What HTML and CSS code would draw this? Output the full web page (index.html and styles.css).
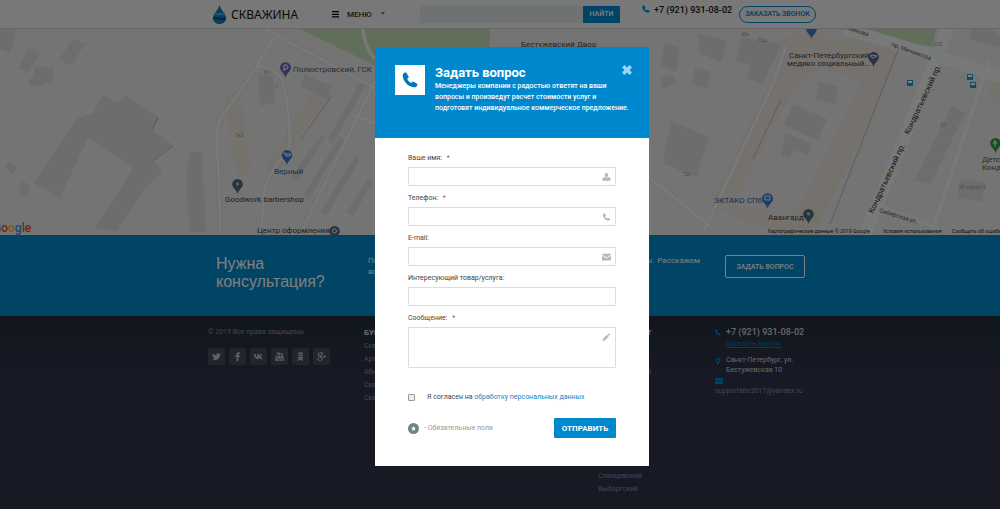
FILE: index.html
```html
<!DOCTYPE html>
<html lang="ru">
<head>
  <meta charset="UTF-8" />
  <meta name="viewport" content="width=device-width, initial-scale=1.0"/>
  <title>Скважина</title>
  <link rel="stylesheet" href="styles.css">
</head>
<body>

  <!-- icons used several times -->
  <svg class="sprite" aria-hidden="true">
    <symbol id="i-phone" viewBox="0 0 16 16">
      <path d="M4.3.8 6.6 4.6c.2.5 0 .9-.4 1.3l-1 .9c.8 2 2.2 3.4 4.1 4.2l1-1c.4-.4.8-.5 1.3-.3l3.5 2c.4.3.5.7.3 1.2-.6 1.6-1.8 2.5-3.4 2.3C6 14.500 1.300 9.500.7 3.900.600 2.300 1.500 1.100 3 .5c.6-.2 1-.1 1.300.3z"/>
    </symbol>
    <symbol id="i-mail" viewBox="0 0 16 12">
      <path d="M1 0h14c.6 0 1 .4 1 1v.6L8 7 0 1.600V1c0-.6.4-1 1-1zM0 3.200l8 5.300 8-5.300V11c0 .6-.4 1-1 1H1c-.6 0-1-.4-1-1z"/>
    </symbol>
    <symbol id="i-pin" viewBox="0 0 12 17">
      <path fill-rule="evenodd" d="M6 0a6 6 0 0 1 6 6c0 4-5 6-6 11C5 12 0 10 0 6a6 6 0 0 1 6-6z"/>
    </symbol>
  </svg>

  <header class="header">
    <div class="header-inner">
      <a class="logo" href="#">
        <svg class="logo-icon" viewBox="0 0 26 38">
          <path fill="#1578b8" d="M13 0c2 8 6 11 9 16 3 5 5 8 4 12-1 7-7 10-13 10S0 34 0 26c0-4 2-7 4-10 3-5 7-8 9-16z"/>
          <path fill="#3bb0e4" d="M4 17c6-3 10 1 18-2l2 4c-9 4-15-1-23 2z"/>
          <path fill="#0b4f80" d="M0 25c9-3 17 3 26 0l-1 4c-8 3-16-3-25 0z"/>
        </svg>
        <span>СКВАЖИНА</span>
      </a>
      <button class="menu" type="button">
        <svg class="menu-icon" viewBox="0 0 8 8"><path d="M0 0h8v1.500H0zM0 3h8v1.500H0zM0 6h8v1.500H0z"/></svg>
        МЕНЮ
        <svg class="menu-arrow" viewBox="0 0 6 4"><path d="M1 0h4L3 3z"/></svg>
      </button>
      <form class="search">
        <input type="search" aria-label="Поиск">
        <button type="button">НАЙТИ</button>
      </form>
      <a class="header-phone" href="tel:+79219310802">
        <svg><use href="#i-phone"/></svg>+7 (921) 931-08-02
      </a>
      <button class="call" type="button">ЗАКАЗАТЬ ЗВОНОК</button>
    </div>
  </header>

  <svg class="map" viewBox="0 0 1000 206" preserveAspectRatio="xMidYMid slice">
    <!-- parks -->
    <path class="park" d="M300 0h190v47H405L372 35z"/>
    <path class="park" d="M840 0h96l-3 17-20-1-50-9z"/>
    <!-- commercial areas -->
    <g class="orange">
      <path d="M225 64l16 2 10 71-12 15-7-27z"/>
      <path d="M313 62l18-6 5 6-40 48-8 25-21 13-1-9z"/>
      <path d="M775 46l8-37 28-9 18 14 40-6 31 17-86 181-25 1-53-19-25-13 56-116z"/>
      <path d="M990 50l10-3v27l-11-6z"/>
    </g>
    <path class="plain" d="M803 48l18-9 41 13-62 125-20 13-22-10-25-3 40-80z"/>
    <!-- buildings -->
    <g class="building">
      <path d="M0 0h17l-7 24-10-4z"/>
      <path d="M28 19l11 5-10 20-10-4z"/>
      <path d="M73 10l12 5-14 22-12-7z"/>
      <path d="M34 38h19v16h-8v3l-16 0v-7l5-2z"/>
      <path d="M102 66l15 8 10-7 33 22-8 12 21 15-20 16 10 10-20 20-26 40-22-3 38-60-45-30-28 60-27-15 45-65 15-5z"/>
      <path d="M190 123h12l4 80h-16l-4-50z"/>
      <path d="M258 46h15l2 28-15 3zM262 57l16-4 1 6-17 4zM305 45l26 12-3 14-28-15z"/>
      <path d="M322 105l3 3-28 44-6-4zM340 108l4 3-36 60-5-5zM356 126l4 4-33 56-6-4zM368 150l5 3-20 34-6-4z"/>
      <path d="M362 50l5 4-34 60-5-4z"/>
      <path d="M671 92l38 16-13 41-33-15z"/>
      <path d="M665 14l15 5-4 24-15-6zM697 5l30 6-5 22-22-8zM695 38l16 5-4 17-16-5zM742 8l40 7-20 40-15-6 3-12-14-5z"/>
      <path d="M818 53l20 4-2 18-20-5zM793 75l34 15-9 22-34-16zM786 104l26 11-4 11-14-5-5 8-8-2z"/>
      <path d="M952 76l13 8-34 70-17-2z"/>
      <path d="M660 50l12-4 5 8-15 6zM960 150l26 3-5 20-24-4z"/>
      <path d="M970 0h22l8 7v12l-30-8z"/>
      <path d="M8 133l10 4-5 8-8-6zM22 151l9 6-5 12-8-5z"/>
    </g>
    <!-- roads -->
    <g class="road-edge">
      <path d="M265 0l110 59M273 9l-16 28-35 51q-6 8-5 24 3 52 3 94M257 37q24 3 27 20 6 30 6 61-24 28-26 47l-3 41"/>
      <path d="M375 52l-75 154M352 85l23 10M363 0q2 20 12 30"/>
      <path d="M786 17l-12 36-72 153M645 145l65 52M653 140l-8 14"/>
    </g>
    <g class="road">
      <path d="M265 0l110 59M273 9l-16 28-35 51q-6 8-5 24 3 52 3 94M257 37q24 3 27 20 6 30 6 61-24 28-26 47l-3 41"/>
      <path d="M375 52l-75 154M352 85l23 10M363 0q2 20 12 30"/>
      <path d="M786 17l-12 36-72 153M645 145l65 52M653 140l-8 14M989 32l-58 174M875 175l65 25"/>
    </g>
    <path class="avenue" d="M948 0L865 206M845 0l95 28 60 20"/>
    <path class="rail" d="M899 18l-69 177M781 70l-28 60M158 88l-6 13M173 117l-20 15M331 68l-30 42"/>

    <g class="num">
      <text x="263" y="45">7к1</text>
      <text x="235" y="108">7к3</text>
      <text x="741" y="7">40л</text>
      <text x="758" y="13">72д</text>
      <text x="683" y="147">72г</text>
      <text x="934" y="17">27б</text>
      <text x="940" y="98">39</text>
      <text x="959" y="160">28 корпус 2</text>
    </g>

    <g class="pins">
      <use href="#i-pin" x="280" y="33" width="11" height="16" fill="#6a69c0"/>
      <use href="#i-pin" x="281" y="121" width="12" height="15" fill="#3c77d2"/>
      <use href="#i-pin" x="232" y="150" width="11" height="15" fill="#4f6d76"/>
      <use href="#i-pin" x="329" y="197" width="11" height="15" fill="#57648a"/>
      <use href="#i-pin" x="806" y="-5" width="11" height="15" fill="#3c77d2"/>
      <use href="#i-pin" x="868" y="23" width="11" height="15" fill="#57648a"/>
      <use href="#i-pin" x="762" y="164" width="11" height="16" fill="#3c77d2"/>
      <use href="#i-pin" x="803" y="180" width="11" height="15" fill="#4f6d76"/>
      <use href="#i-pin" x="990" y="109" width="11" height="15" fill="#2c9c41"/>
    </g>
    <g class="pin-mark">
      <path d="M284 42v-6h2q2 0 2 2t-2 2h-2"/>
      <path d="M283 124h2l1 3h4l1-2h-6"/>
      <path d="M870 27l3-1 4 1-4 2zM765 167h5v4h-5zM995 111v7M993 115l2-3 2 3"/>
      <circle cx="237.500" cy="155" r="1"/>
      <circle cx="808.500" cy="185" r="1"/>
      <circle cx="334.500" cy="202" r="2"/>
    </g>
    <g class="bus">
      <path d="M907 51h6v6h-6zM967 45h6v6h-6zM970 53h6v6h-6z"/>
      <path class="bus-window" d="M908 52h4v2h-4zM968 46h4v2h-4zM971 54h4v2h-4z"/>
    </g>

    <g class="place">
      <text class="violet" x="293" y="43">Полюстровский, ГСК</text>
      <text class="blue" x="274" y="145">Верный</text>
      <text x="225" y="173">Goodwork barbershop</text>
      <text x="257" y="204">Центр оформления</text>
      <text x="521" y="18">Бестужевский Двор</text>
      <text x="789" y="29">Санкт-Петербургский</text>
      <text x="787" y="37">медико социальный...</text>
      <text class="blue" x="714" y="174">ЭКТАКО СПб</text>
      <text x="768" y="191">Авангард</text>
      <text class="green" x="982" y="133">Детский</text>
      <text class="green" x="982" y="141">Кондратьев</text>
    </g>
    <g class="street">
      <text transform="translate(909 106) rotate(-65)">Кондратьевский пр.</text>
      <text transform="translate(873 185) rotate(-65)">Кондратьевский пр.</text>
      <text class="small" transform="translate(891 17) rotate(20)">пр. Мечникова</text>
      <text class="small" transform="translate(828 -5) rotate(17)">пр. Мечникова</text>
      <text class="small" transform="translate(879 183) rotate(17)">Сибирская ул.</text>
    </g>
    <g class="copy">
      <text x="768" y="204">Картографические данные © 2019 Google</text>
      <text x="883" y="204">Условия использования</text>
      <text x="952" y="204">Сообщить об ошибке</text>
    </g>
    <text class="google" x="-7" y="203"><tspan class="g-blue">G</tspan><tspan class="g-red">o</tspan><tspan class="g-yellow">o</tspan><tspan class="g-blue">g</tspan><tspan class="g-green">l</tspan><tspan class="g-red">e</tspan></text>
  </svg>

  <section class="banner">
    <div class="banner-inner">
      <h2>Нужна консультация?</h2>
      <p>Подробно расскажем о наших услугах, видах и стоимости любой работы. Расскажем
        вовремя обо всех скидках и ответим на вопросы.</p>
      <button type="button">ЗАДАТЬ ВОПРОС</button>
    </div>
  </section>

  <footer class="footer">
    <div class="footer-inner">
      <div>
        <p class="copyright">© 2019 Все права защищены.</p>
        <div class="social">
          <a href="#" aria-label="Twitter"><svg viewBox="0 0 16 16"><path d="M15.500 3.500l-1.500 1.500c0 6-4 9.500-9 9.500-1.800 0-3.300-.5-4.500-1.300 1.700.1 3.200-.3 4.400-1.300-1.400-.1-2.400-.9-2.800-2.200h1.300C2 9.300 1 8 1 6.500l1.400.4C1 5.800.7 4 1.500 2.600 3.200 4.600 5.400 5.800 8 6c-.5-2.500 1.200-4 3-4 .9 0 1.700.4 2.300 1l1.900-.7-1.200 1.600z"/></svg></a>
          <a href="#" aria-label="Facebook"><svg viewBox="0 0 16 16"><path d="M9.500 16V9h2.400l.4-2.900H9.500V4.600c0-.8.300-1.300 1.400-1.300h1.500V.7C12 .6 11.200.500 10.300.500 8 .500 6.500 1.900 6.500 4.300v1.800H4V9h2.500v7z"/></svg></a>
          <a href="#" aria-label="VK"><svg viewBox="0 0 16 16"><path d="M8.700 13C3.500 13 .600 9.500 0 3.500h2.800c.2 3.700 1.500 5.500 2.900 6V3.500h2.700v3.300c1.400-.2 2.500-1.700 3-3.300h2.800c-.4 2-1.700 3.500-2.900 4.400 1.300.7 2.900 2.200 3.700 5.100h-3c-.5-1.500-1.800-2.900-3.600-3.100V13z"/></svg></a>
          <a href="#" aria-label="YouTube"><svg viewBox="0 0 16 16"><path fill-rule="evenodd" d="M3 0h1.200l.8 2.500L5.800 0H7L5.600 4v2.500H4.400V4zM8.200 1.500c1.400 0 1.500 1 1.500 2.500s-.1 2.600-1.500 2.600S6.700 5.500 6.700 4s.1-2.500 1.500-2.500zM10.800 1.700H12v3.600l.8-.4V1.700H14v4.800h-3.200zM2.500 7.500h11c1.200 0 2 .8 2 2v4.500c0 1.200-.8 2-2 2h-11c-1.200 0-2-.8-2-2V9.500c0-1.200.8-2 2-2zM2 9v1h1v5h1v-5h1V9zM6 10.500V15h3v-4.500H8V14H7v-3.500zM10 9v6h3.500v-4.500H11V9zM11 11.500h1.500V14H11z"/></svg></a>
          <a href="#" aria-label="Одноклассники"><svg viewBox="0 0 16 16"><path fill-rule="evenodd" d="M8 0a4 4 0 1 1 0 8 4 4 0 0 1 0-8zM8 2.300a1.700 1.700 0 1 0 0 3.400 1.700 1.700 0 0 0 0-3.400zM4 8c2.500 1.700 5.500 1.700 8 0l1 1.800c-1 .7-2 1.100-3 1.300l2.900 3L11.300 16 8 12.700 4.700 16l-1.600-1.900 2.900-3c-1-.2-2-.6-3-1.300z"/></svg></a>
          <a href="#" aria-label="Google+"><svg viewBox="0 0 16 16"><path fill-rule="evenodd" d="M6 .5h5l-1 1H8.800c2 2 1.200 4-.6 5.300-1 .9-.4 1.400.8 2.400 3.200 2.600 1 6.300-3.700 6.300-5.500 0-6-4.300-2.300-5.600 1-.4 2-.4 2.500-.5-.6-.6-.7-1-.4-1.800C-.500 7.600.500.500 6 .5zM5.400 1.400c-3 0-1.400 5.300.8 5.200 2.500-.2 1.400-5.200-.8-5.200zM5.800 10.200c-5 .1-4 4.300 0 4.300 4.200 0 3.300-2.800 0-4.300zM12.500 5H14v2h2v1.500h-2v2h-1.500v-2h-2V7h2z"/></svg></a>
        </div>
      </div>
      <nav class="links">
        <h3>БУРЕНИЕ СКВАЖИН</h3>
        <a href="#">Скважина на песок</a>
        <a href="#">Артезианская скважина</a>
        <a href="#">Абиссинская скважина</a>
        <a href="#">Скважина под ключ</a>
        <a href="#">Скважина на воду</a>
      </nav>
      <nav class="links">
        <h3>РАЙОН РАБОТ</h3>
        <a href="#">Гатчинский</a>
        <a href="#">Киришский</a>
        <a href="#">Ломоносовский</a>
        <a href="#">Кировский</a>
        <a href="#">Лужский</a>
        <a href="#">Тосненский</a>
        <a href="#">Волховский</a>
        <a href="#">Приозерский</a>
        <a href="#">Тихвинский</a>
        <a href="#">Волосовский</a>
        <a href="#">Сланцевский</a>
        <a href="#">Выборгский</a>
      </nav>
      <address class="contacts">
        <svg class="c-phone"><use href="#i-phone"/></svg>
        <div>
          <a class="phone" href="tel:+79219310802">+7 (921) 931-08-02</a>
          <a class="order" href="#">Заказать звонок</a>
        </div>
        <svg class="c-pin" viewBox="0 0 12 17"><path fill-rule="evenodd" d="M6 0a6 6 0 0 1 6 6c0 4-5 6-6 11C5 12 0 10 0 6a6 6 0 0 1 6-6zM6 3a3 3 0 1 0 0 6 3 3 0 0 0 0-6z"/></svg>
        <p>Санкт-Петербург, ул. Бестужевская 10</p>
        <svg class="c-mail"><use href="#i-mail"/></svg>
        <a class="email" href="mailto:supportsite2017@yandex.ru">supportsite2017@yandex.ru</a>
      </address>
    </div>
  </footer>

  <div class="overlay">
    <div class="modal" role="dialog" aria-labelledby="modal-title">
      <div class="modal-head">
        <div class="modal-icon"><svg><use href="#i-phone"/></svg></div>
        <div class="modal-text">
          <h1 id="modal-title">Задать вопрос</h1>
          <p>Менеджеры компании с радостью ответят на ваши вопросы и произведут расчет стоимости услуг и подготовят индивидуальное коммерческое предложение.</p>
        </div>
        <button class="close" type="button" aria-label="Закрыть">
          <svg viewBox="0 0 10 10"><path d="M2.500 0L5 2.500 7.500 0 10 2.500 7.500 5 10 7.500 7.500 10 5 7.500 2.500 10 0 7.500 2.500 5 0 2.500z"/></svg>
        </button>
      </div>
      <form class="modal-body">
        <div class="field">
          <label for="name">Ваше имя: <span>*</span></label>
          <input id="name" type="text" required>
          <svg viewBox="0 0 16 16"><path d="M8 0c2.300 0 3.500 1.600 3.500 4S10 8.500 8 8.500 4.500 6.500 4.500 4 5.700 0 8 0zM0 15.500V12c0-2 2-3 4.500-4 2 2 5 2 7 0 2.500 1 4.500 2 4.500 4v3.500z"/></svg>
        </div>
        <div class="field">
          <label for="phone">Телефон: <span>*</span></label>
          <input id="phone" type="tel" required>
          <svg><use href="#i-phone"/></svg>
        </div>
        <div class="field">
          <label for="email">E-mail:</label>
          <input id="email" type="email">
          <svg><use href="#i-mail"/></svg>
        </div>
        <div class="field">
          <label for="product">Интересующий товар/услуга:</label>
          <input id="product" type="text">
        </div>
        <div class="field">
          <label for="message">Сообщение: <span>*</span></label>
          <textarea id="message" required></textarea>
          <svg viewBox="0 0 16 16"><path d="M12 0.500l3.500 3.500-2 2L10 2.500zM9 3.500L12.500 7l-8 8L0 16l1-4.500z"/></svg>
        </div>
        <div class="agree">
          <input id="agree" type="checkbox">
          <label for="agree">Я согласен на <a href="#">обработку персональных данных</a></label>
        </div>
        <div class="modal-foot">
          <span class="star"><svg viewBox="0 0 10 10"><path d="M5 0l1.300 3.300L10 3.700 7.200 6 8 9.700 5 7.800 2 9.700 2.800 6 0 3.700l3.700-.4z"/></svg></span>
          <span class="required">- Обязательные поля</span>
          <button type="button">ОТПРАВИТЬ</button>
        </div>
      </form>
    </div>
  </div>

</body>
</html>
```
FILE: styles.css
```css
* {
  box-sizing: border-box;
}

body {
  margin: 0;
  min-height: 100vh;
  display: flex;
  flex-direction: column;
  overflow: hidden;
  font-family: Roboto, "Noto Sans", sans-serif;
  font-size: 7px;
  color: #444;
  background: #2f344b;
}

h1, h2, h3, p {
  margin: 0;
}

a {
  color: inherit;
  text-decoration: none;
}

button, input, textarea {
  font-family: inherit;
  font-size: 7px;
  padding: 0;
  border: none;
  border-radius: 0;
}

button {
  cursor: pointer;
}

.sprite {
  position: absolute;
  width: 0;
  height: 0;
}

/* header */
.header {
  background: #f0f0f0;
  border-bottom: 1px solid #cfcfcf;
}

.header-inner {
  display: flex;
  align-items: center;
  max-width: 632px;
  height: 28px;
  margin: 0 auto;
  padding-left: 29px;
}

.logo {
  display: flex;
  align-items: center;
  gap: 5px;
  width: 119px;
  font-family: "Noto Sans", sans-serif;
  font-size: 12px;
  color: #111;
}

.logo-icon {
  width: 13px;
  height: 19px;
}

.menu {
  display: flex;
  align-items: center;
  gap: 8px;
  width: 88px;
  background: none;
  font-size: 8px;
  font-weight: 500;
  color: #333;
}

.menu-icon {
  width: 7px;
  height: 7px;
}

.menu-arrow {
  width: 6px;
  height: 4px;
  fill: #777;
}

.search {
  display: flex;
  flex: 1;
  height: 17px;
}

.search input {
  flex: 1;
  min-width: 0;
  background: #dfe4e4;
}

.search button {
  width: 37px;
  background: #0088cc;
  color: #fff;
  font-weight: 500;
}

.header-phone {
  display: flex;
  gap: 4px;
  width: 97px;
  margin-left: 22px;
  padding-bottom: 8px;
  font-size: 9px;
  font-weight: 500;
  line-height: 10px;
  white-space: nowrap;
  color: #111;
}

.header-phone svg {
  width: 8px;
  height: 8px;
  fill: #0088cc;
}

.call {
  width: 77px;
  height: 17px;
  border: 1px solid #0088cc;
  border-radius: 9px;
  background: none;
  color: #0078b8;
  font-weight: 500;
}

/* map */
.map {
  display: block;
  width: 100%;
  height: 206px;
  background: #e6e9e7;
}

.park { fill: #c3dfb5; }
.orange { fill: #eae2da; }
.plain { fill: #e6e9e7; }
.building { fill: #dbdbda; }

.road, .road-edge, .avenue, .rail {
  fill: none;
  stroke: #f1f2f2;
  stroke-width: 3;
}

.road-edge {
  stroke: #d8dadb;
  stroke-width: 4;
}

.avenue {
  stroke-width: 12;
}

.rail {
  stroke: #bdb9b5;
  stroke-width: 1;
}

.num {
  font-size: 5px;
  fill: #999;
}

.pin-mark {
  fill: none;
  stroke: #fff;
  stroke-width: 1;
}

.bus { fill: #2196cf; }
.bus-window { fill: #fff; }

.place {
  font-size: 8px;
  fill: #444;
}

.violet { fill: #55557f; }
.blue { fill: #2c5c9e; }
.green { fill: #2a7038; }

.street {
  font-size: 8px;
  fill: #333;
}

.street .small {
  font-size: 6px;
  fill: #555;
}

.copy {
  font-family: "Noto Sans", sans-serif;
  font-size: 5px;
  fill: #222;
}

.google {
  font-size: 12px;
  font-weight: 500;
}

.g-blue { fill: #4285f4; }
.g-red { fill: #ea4335; }
.g-yellow { fill: #fbbc05; }
.g-green { fill: #34a853; }

/* banner */
.banner {
  background: #0088cc;
  color: #fff;
}

.banner-inner {
  display: grid;
  grid-template-columns: 152px 332px 105px;
  justify-content: center;
  align-items: start;
  height: 81px;
  padding: 20px 0 0 21px;
}

.banner h2 {
  font-family: "Liberation Sans", Arial, sans-serif;
  font-size: 16px;
  font-weight: normal;
  line-height: 18px;
}

.banner p {
  font-size: 8px;
  line-height: 11px;
  text-align: justify;
}

.banner button {
  width: 80px;
  height: 23px;
  margin-left: 25px;
  border: 1px solid #fff;
  border-radius: 2px;
  background: none;
  color: #fff;
  font-weight: 500;
}

/* footer */
.footer {
  flex: 1;
  background: linear-gradient(#222c38, #2f344b 60px);
  color: #8b8d97;
}

.footer-inner {
  display: grid;
  grid-template-columns: 156px 234px 117px 93px;
  justify-content: center;
  max-height: 193px;
  padding: 11px 0 0 16px;
}

.copyright {
  line-height: 11px;
}

.social {
  display: flex;
  gap: 4px;
  margin-top: 10px;
}

.social a {
  display: flex;
  align-items: center;
  justify-content: center;
  width: 17px;
  height: 17px;
  border-radius: 2px;
  background: #464b5b;
}

.social svg {
  width: 9px;
  height: 9px;
  fill: #c4c6cc;
}

.links h3 {
  margin-bottom: 2px;
  font-size: 8px;
  line-height: 11px;
  color: #d6d7dc;
}

.links a {
  display: block;
  line-height: 13px;
}

.contacts {
  display: grid;
  grid-template-columns: 11px 1fr;
  align-content: start;
  font-style: normal;
  color: #d0d1d6;
}

.contacts svg {
  width: 6px;
  height: 7px;
  margin-top: 2px;
  fill: #0088cc;
}

.phone, .order {
  display: block;
}

.phone {
  font-size: 9px;
  font-weight: 500;
  line-height: 11px;
  white-space: nowrap;
}

.order {
  color: #0078b8;
  line-height: 12px;
  text-decoration: underline;
}

.contacts p {
  margin: 5px 0 1px;
  line-height: 10px;
}

.contacts .c-pin {
  margin-top: 8px;
}

.contacts .c-mail {
  width: 8px;
  height: 6px;
}

.email {
  grid-column: 1 / 3;
  margin-top: 3px;
  color: #8b8d97;
}

/* modal */
.overlay {
  position: fixed;
  inset: 0;
  display: flex;
  justify-content: center;
  align-items: flex-start;
  padding: 47px 0 0 24px;
  background: rgba(0, 0, 0, 0.5);
}

.modal {
  width: 274px;
  background: #fff;
}

.modal-head {
  display: flex;
  align-items: flex-start;
  min-height: 91px;
  padding: 18px 17px 0 20px;
  background: #0088cf;
  color: #fff;
}

.modal-icon {
  display: flex;
  align-items: center;
  justify-content: center;
  width: 30px;
  height: 30px;
  margin-right: 10px;
  background: #fff;
}

.modal-icon svg {
  width: 16px;
  height: 16px;
  fill: #0078b8;
}

.modal-text {
  flex: 1;
  margin-right: -11px;
}

.modal-text h1 {
  margin-bottom: 1px;
  font-size: 13px;
  line-height: 15px;
}

.modal-text p {
  font-weight: 500;
  line-height: 11px;
}

.close {
  width: 10px;
  height: 10px;
  background: none;
}

.close svg {
  display: block;
  fill: #9fd3ef;
}

.modal-body {
  padding: 15px 33px 28px;
}

.field {
  position: relative;
  margin-bottom: 7px;
}

.field label {
  display: block;
  margin-bottom: 4px;
  line-height: 10px;
}

.field label span {
  margin-left: 3px;
  color: #8a5a5a;
}

.field input,
.field textarea {
  display: block;
  width: 100%;
  height: 19px;
  padding: 0 20px 0 6px;
  border: 1px solid #ddd;
  border-radius: 1px;
  background: #fff;
}

.field textarea {
  height: 41px;
  resize: none;
}

.field svg {
  position: absolute;
  top: 20px;
  right: 5px;
  width: 9px;
  height: 8px;
  fill: #b5b8b8;
}

.agree {
  display: flex;
  align-items: center;
  gap: 12px;
  margin-top: 24px;
  line-height: 10px;
}

.agree input {
  appearance: none;
  width: 7px;
  height: 7px;
  margin: 0;
  border: 1px solid #999;
  border-radius: 1px;
  background: #eee;
}

.agree a {
  color: #1b7fc0;
}

.modal-foot {
  display: flex;
  align-items: center;
  gap: 5px;
  margin-top: 16px;
}

.star {
  display: flex;
  align-items: center;
  justify-content: center;
  width: 11px;
  height: 11px;
  border-radius: 50%;
  background: #6f8388;
}

.star svg {
  width: 5px;
  height: 5px;
  fill: #fff;
}

.required {
  color: #999;
}

.modal-foot button {
  width: 62px;
  height: 20px;
  margin-left: auto;
  border-radius: 1px;
  background: #0088cc;
  color: #fff;
  font-size: 8px;
  font-weight: bold;
}
```
